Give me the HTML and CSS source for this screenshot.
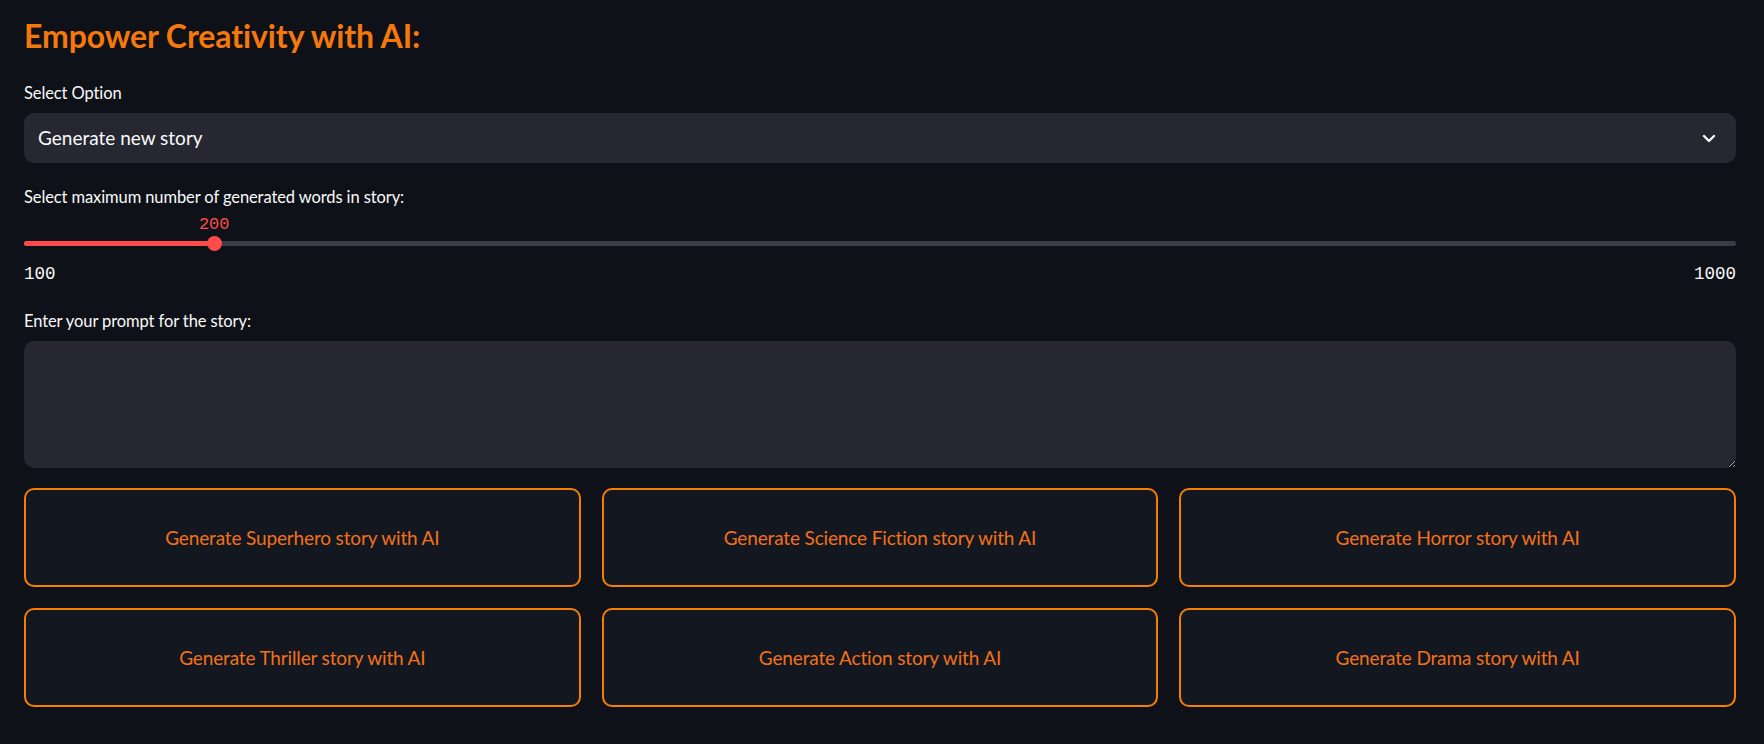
FILE: index.html
```html
<!DOCTYPE html>
<html lang="en">
<head>
<meta charset="utf-8">
<title>Empower Creativity with AI</title>
<link rel="stylesheet" href="styles.css">
</head>
<body>
<main class="main">
  <h3 class="title">Empower Creativity with AI:</h3>

  <div class="label label-first">Select Option</div>
  <div class="select">
    <span class="select-value">Generate new story</span>
    <svg class="chevron" width="14" height="9" viewBox="0 0 14 9" aria-hidden="true">
      <path d="M2 2 L7 7 L12 2" fill="none" stroke="#fafafa" stroke-width="2.4" stroke-linecap="round" stroke-linejoin="round"/>
    </svg>
  </div>

  <div class="label label-slider">Select maximum number of generated words in story:</div>
  <div class="slider">
    <div class="track">
      <div class="track-fill" style="width: 11.11%"></div>
      <div class="thumb" style="left: 11.11%"></div>
      <div class="thumb-value" style="left: 11.11%">200</div>
    </div>
    <div class="ticks">
      <span>100</span>
      <span>1000</span>
    </div>
  </div>

  <div class="label label-prompt">Enter your prompt for the story:</div>
  <textarea class="prompt"></textarea>

  <div class="buttons">
    <button class="genre-btn">Generate Superhero story with AI</button>
    <button class="genre-btn">Generate Science Fiction story with AI</button>
    <button class="genre-btn">Generate Horror story with AI</button>
    <button class="genre-btn">Generate Thriller story with AI</button>
    <button class="genre-btn">Generate Action story with AI</button>
    <button class="genre-btn">Generate Drama story with AI</button>
  </div>
</main>
</body>
</html>
```

FILE: styles.css
```css
html, body {
  margin: 0;
  padding: 0;
  background: #0e1117;
  height: 100%;
}

body {
  font-family: "Lato", "Noto Sans", sans-serif;
  color: #fafafa;
}

.main {
  padding: 16px 28px 0 24px;
  width: 1712px;
}

.title {
  margin: 0;
  font-size: 32px;
  line-height: 40px;
  font-weight: 700;
  color: #f5780c;
  letter-spacing: -0.1px;
}

.label {
  font-size: 16.5px;
  line-height: 22px;
  color: #fafafa;
  letter-spacing: -0.1px;
}

.label-first {
  margin-top: 26px;
}

.select {
  margin-top: 9px;
  height: 50px;
  background: #262730;
  border-radius: 10px;
  display: flex;
  align-items: center;
  justify-content: space-between;
  padding: 0 20px 0 14px;
}

.select-value {
  font-size: 19px;
  line-height: 50px;
  color: #fafafa;
  letter-spacing: 0;
}

.chevron {
  display: block;
}

.label-slider {
  margin-top: 23px;
}

.slider {
  padding-top: 33px;
}

.track {
  position: relative;
  height: 5px;
  border-radius: 3px;
  background: #3b3d46;
}

.track-fill {
  height: 100%;
  border-radius: 3px;
  background: #ff4b4b;
}

.thumb {
  position: absolute;
  top: -5px;
  width: 15px;
  height: 15px;
  margin-left: -7.5px;
  border-radius: 50%;
  background: #ff4b4b;
}

.thumb-value {
  position: absolute;
  top: -26px;
  transform: translateX(-50%);
  font-family: "Liberation Mono", "DejaVu Sans Mono", monospace;
  font-size: 17px;
  line-height: 20px;
  color: #ff4b4b;
}

.ticks {
  margin-top: 18px;
  display: flex;
  justify-content: space-between;
  font-family: "Liberation Mono", "DejaVu Sans Mono", monospace;
  font-size: 17.5px;
  line-height: 20px;
  color: #fafafa;
}

.label-prompt {
  margin-top: 26px;
}

.prompt {
  display: block;
  box-sizing: border-box;
  margin-top: 9px;
  width: 100%;
  height: 127px;
  background: #262730;
  border: none;
  border-radius: 10px;
  resize: vertical;
  color: #fafafa;
  font-family: inherit;
  outline: none;
}

.buttons {
  margin-top: 20px;
  display: grid;
  grid-template-columns: repeat(3, 1fr);
  column-gap: 21px;
  row-gap: 21px;
}

.genre-btn {
  height: 99px;
  box-sizing: border-box;
  background: #131720;
  border: 2px solid #f77f00;
  border-radius: 10px;
  color: #f2711a;
  font-family: "Lato", "Noto Sans", sans-serif;
  font-size: 19px;
  letter-spacing: -0.15px;
  cursor: pointer;
}
```
